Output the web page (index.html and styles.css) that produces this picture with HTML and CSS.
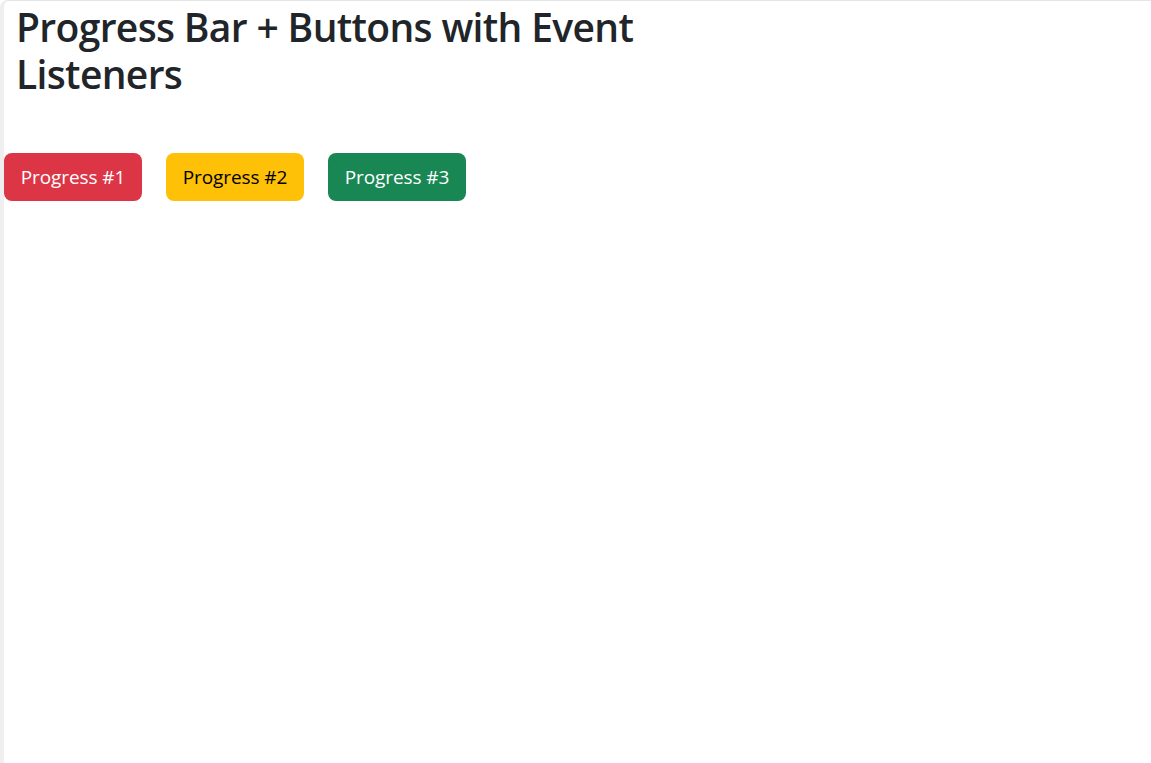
FILE: index.html
```html
<!DOCTYPE html>
<html lang="en">
<head>
<meta charset="utf-8">
<title>Progress Bar + Buttons with Event Listeners</title>
<link rel="stylesheet" href="styles.css">
</head>
<body>
<div class="frame">
  <h1 class="title">Progress Bar + Buttons with Event Listeners</h1>
  <div class="actions">
    <button class="btn btn-danger">Progress #1</button>
    <button class="btn btn-warning">Progress #2</button>
    <button class="btn btn-success">Progress #3</button>
  </div>
</div>
</body>
</html>
```

FILE: styles.css
```css
html, body {
  margin: 0;
  padding: 0;
  background: #fff;
}
body {
  font-family: "Open Sans", "Noto Sans", sans-serif;
  color: #212529;
}
.frame {
  box-sizing: border-box;
  min-height: 763px;
  border-top: 1px solid #e6e6e6;
  border-left: 4px solid #efefef;
  border-top-left-radius: 8px;
  background: #fff;
}
.title {
  margin: 2px 0 0 12px;
  max-width: 640px;
  font-size: 39px;
  line-height: 47px;
  font-weight: 600;
  letter-spacing: -0.65px;
}
.actions {
  display: flex;
  gap: 24px;
  margin-top: 56px;
}
.btn {
  font-family: inherit;
  font-size: 19px;
  line-height: 30px;
  padding: 8px 0;
  border: 1px solid transparent;
  border-radius: 8px;
  width: 138px;
  white-space: nowrap;
  text-align: center;
  letter-spacing: -0.1px;
  cursor: pointer;
}
.btn-danger { background: #dc3545; color: #fff; }
.btn-warning { background: #ffc107; color: #000; }
.btn-success { background: #198754; color: #fff; }
```
